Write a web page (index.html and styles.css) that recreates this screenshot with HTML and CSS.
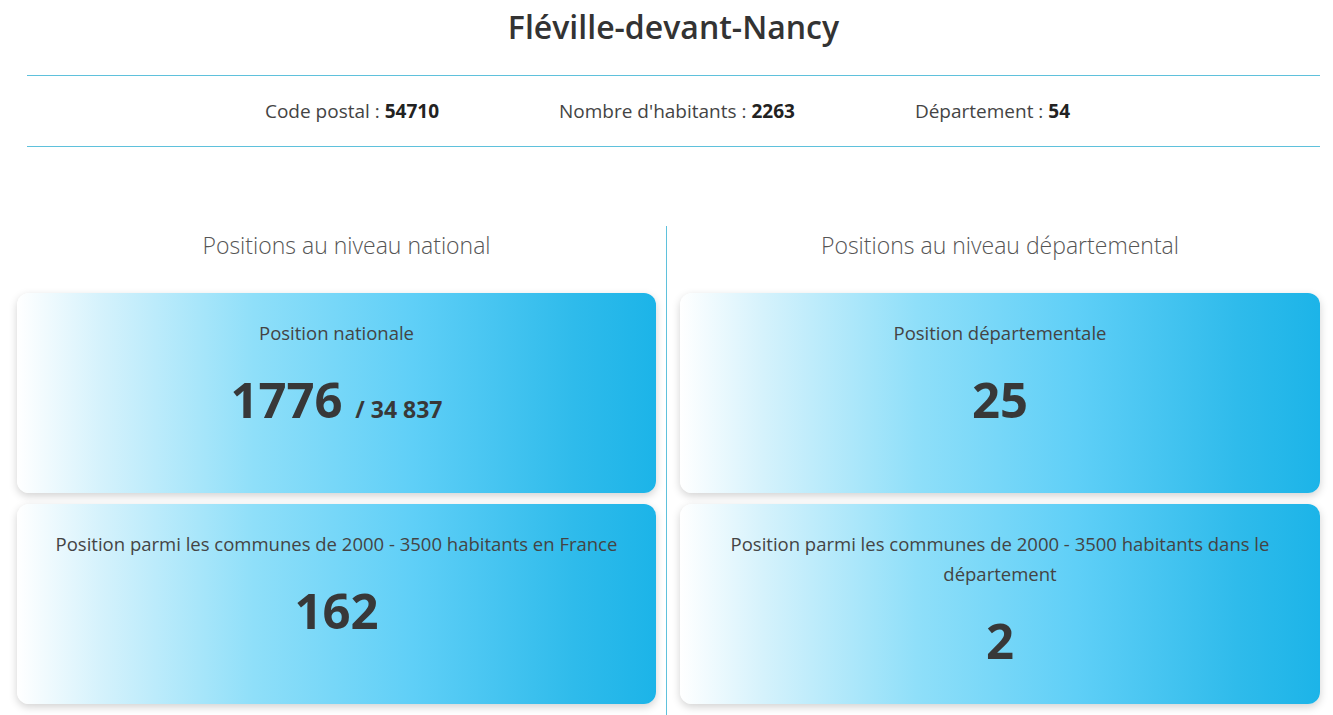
FILE: index.html
```html
<!DOCTYPE html>
<html lang="fr">
<head>
    <meta charset="UTF-8">
    <meta name="viewport" content="width=device-width, initial-scale=1.0">
    <title>Fléville-devant-Nancy</title>
    <link rel="stylesheet" href="styles.css">
</head>
<body>

<h1 class="city-name">Fléville-devant-Nancy</h1>

<!-- Infos générales -->
<div class="city-infos">
    <span>Code postal : <b>54710</b></span>
    <span>Nombre d'habitants : <b>2263</b></span>
    <span>Département : <b>54</b></span>
</div>

<div class="positions">
    <!-- National -->
    <div class="positions-col national">
        <h2>Positions au niveau national</h2>
        <div class="rank-card">
            <p class="rank-label">Position nationale</p>
            <p class="rank-value">1776 <small>/ 34 837</small></p>
        </div>
        <div class="rank-card">
            <p class="rank-label">Position parmi les communes de 2000 - 3500 habitants en France</p>
            <p class="rank-value">162</p>
        </div>
    </div>

    <!-- Départemental -->
    <div class="positions-col departement">
        <h2>Positions au niveau départemental</h2>
        <div class="rank-card">
            <p class="rank-label">Position départementale</p>
            <p class="rank-value">25</p>
        </div>
        <div class="rank-card">
            <p class="rank-label">Position parmi les communes de 2000 - 3500 habitants dans le département</p>
            <p class="rank-value">2</p>
        </div>
    </div>
</div>

</body>
</html>
```

FILE: styles.css
```css
/* Page */
body {
    font-family: "Open Sans", "Noto Sans", sans-serif;
    background-color: #fff;
    color: #333;
    margin: 0;
    padding: 0;
}

.city-name {
    margin: 0;
    padding: 5px 0 0 14px;
    height: 70px;
    box-sizing: border-box;
    font-size: 32px;
    line-height: 44px;
    font-weight: 600;
    text-align: center;
    color: #333;
}

/* Infos bar */
.city-infos {
    margin: 5px 13px 0 27px;
    height: 70px;
    display: flex;
    justify-content: center;
    align-items: center;
    gap: 120px;
    padding-right: 12px;
    border-top: 1px solid #5fc1dc;
    border-bottom: 1px solid #5fc1dc;
    font-size: 19px;
    color: #444;
}

.city-infos b {
    color: #222;
}

/* Positions */
.positions {
    display: grid;
    grid-template-columns: 650px 1fr;
    margin: 79px 13px 0 17px;
}

.positions-col.national {
    padding-right: 10px;
    border-right: 1px solid #5fc1dc;
}

.positions-col.national h2 {
    padding-left: 20px;
}

.positions-col.departement {
    padding-left: 13px;
}

.positions-col h2 {
    margin: 0;
    padding-top: 3px;
    height: 67px;
    box-sizing: border-box;
    font-size: 23px;
    font-weight: 300;
    text-align: center;
    color: #555;
}

.rank-card {
    height: 200px;
    margin-bottom: 11px;
    padding: 25px 30px 0;
    box-sizing: border-box;
    border-radius: 12px;
    background: linear-gradient(to right, #fff 0%, #d5f2fc 13%, #8fdff9 37%, #5fcff7 62%, #2fbbeb 87%, #1cb4e8 100%);
    box-shadow: 0 3px 8px rgba(0, 0, 0, 0.18);
    text-align: center;
}

.rank-label {
    margin: 0;
    font-size: 18.5px;
    line-height: 30px;
    color: #444;
}

.rank-value {
    margin: 22px 0 0;
    font-size: 49px;
    line-height: 58px;
    font-weight: 700;
    color: #383838;
}

.rank-value small {
    font-size: 23px;
}
```
